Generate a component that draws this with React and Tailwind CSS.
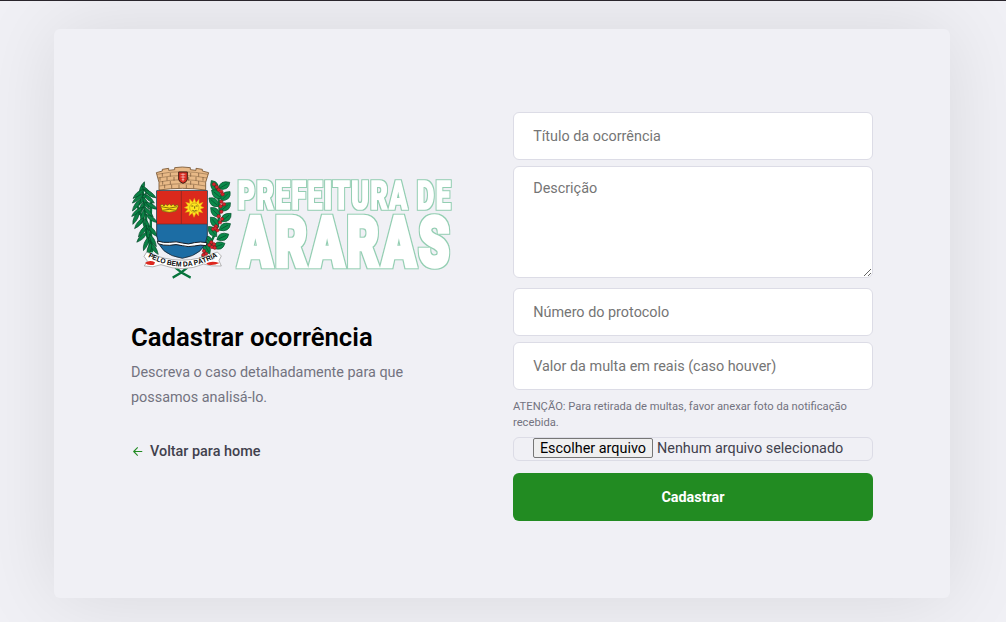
import React from "react";

const leftLeaves = [
  [66, 100, 20], [80, 108, -45], [56, 116, 50], [90, 116, -55], [54, 130, 50], [86, 130, -50], [68, 132, 30],
  [78, 144, -30], [50, 150, 35], [94, 152, -60], [64, 160, 20], [52, 170, 50], [84, 170, -45],
  [48, 188, 25], [68, 184, 10], [94, 190, -55], [58, 204, 40], [82, 210, -25], [98, 228, -40],
  [68, 228, 35], [86, 240, -15], [66, 246, 45], [98, 256, -30], [78, 266, 20], [102, 280, -35], [88, 282, 15],
];

const rightLeaves = [
  [284, 94, -30], [312, 92, 60], [290, 118, -50], [316, 124, 45], [282, 142, -50], [316, 156, 50],
  [286, 172, -45], [318, 188, 50], [284, 202, -40], [314, 216, 60], [278, 230, -40], [308, 246, 65],
  [266, 258, -40], [296, 272, 70], [260, 280, -30],
];

const berries = [
  [282, 88], [290, 96], [296, 104], [304, 110], [308, 118], [304, 140], [312, 148], [302, 154], [304, 170],
  [296, 184], [306, 192], [300, 202], [288, 214], [280, 222], [292, 226], [286, 220], [274, 262], [282, 268],
  [276, 276], [284, 278], [268, 270], [252, 288], [258, 296], [250, 300],
];

const bricks = [
  [127, 61], [151, 61], [212, 61], [236, 61], [120, 73], [141, 73], [162, 73], [206, 73], [228, 73],
  [249, 73], [128, 85], [151, 85], [212, 85], [236, 85], [134, 96], [155, 96], [177, 96], [199, 96], [221, 96],
];

function Logo() {
  return (
    <svg className="block h-[114px] w-[321px] overflow-visible" viewBox="33 33 963 342" role="img" aria-label="Prefeitura de Araras">
      <defs>
        <filter id="letter-edge" x="-5%" y="-10%" width="110%" height="120%" colorInterpolationFilters="sRGB">
          <feMorphology in="SourceAlpha" operator="dilate" radius="3" result="spread" />
          <feFlood floodColor="#93ceb2" />
          <feComposite in2="spread" operator="in" result="edge" />
          <feMerge>
            <feMergeNode in="edge" />
            <feMergeNode in="SourceGraphic" />
          </feMerge>
        </filter>
      </defs>
      <g fill="none" stroke="#07743c" strokeWidth="7">
        <path d="M66 92Q76 180 92 292M50 148Q70 190 86 262M94 140Q90 210 96 292" />
        <path d="M280 82Q330 190 246 306M158 368Q180 358 202 338M212 368Q188 358 166 338" />
      </g>
      <g fill="#0a8144" stroke="#064a2a" strokeWidth="2">
        {leftLeaves.map(([x, y, a]) => (
          <path key={`${x}-${y}`} transform={`translate(${x} ${y}) rotate(${a})`} d="M0-21Q11-3 0 22Q-11 2 0-21Z" />
        ))}
      </g>
      <g fill="#0a8a4a" stroke="#07502d" strokeWidth="2">
        {rightLeaves.map(([x, y, a]) => (
          <path key={`${x}-${y}`} transform={`translate(${x} ${y}) rotate(${a})`} d="M0-20Q22-4 0 19Q-22 2 0-20ZM0-12V13" />
        ))}
      </g>
      <g fill="#d9232a" stroke="#78151b" strokeWidth="1.5">
        {berries.map(([x, y]) => <circle key={`${x}-${y}`} cx={x} cy={y} r="5.2" />)}
      </g>

      <path d="M109 53L127 48V43L146 40V46L164 44V38L187 36L211 38V44L228 46V40L247 43V48L266 53L257 82V105Q187 95 117 105V82Z" fill="#e8b987" stroke="#76532f" strokeWidth="2.5" />
      <path d="M111 58Q187 42 264 58M114 69Q187 54 261 69M117 81Q187 67 257 81M118 93Q187 79 257 93" fill="none" stroke="#80603f" strokeWidth="1.6" />
      <g stroke="#715135" strokeWidth="2">
        {bricks.map(([x, y]) => <path key={`${x}-${y}`} d={`M${x} ${y - 7}v11`} />)}
      </g>
      <path d="M176 51H202V73Q200 82 189 85Q177 81 176 73Z" fill="#dc2b20" stroke="#432018" strokeWidth="3" />
      <path d="M182 58H196M182 66H196M185 74H193M189 55V79" stroke="#fff" strokeWidth="1.5" />

      <path d="M110 107H262V242Q256 299 187 310Q116 299 110 242Z" fill="#1c6da4" stroke="#222b35" strokeWidth="2.5" />
      <path d="M111 108H261V207H111Z" fill="#da291c" />
      <path d="M184 108V207M111 207H261" stroke="#7f251f" strokeWidth="2" />
      <path d="M121 151L127 148L132 153L137 147L142 152L148 147L154 152L160 147L164 153L172 149L175 154L168 168Q148 176 127 168Z" fill="#ffdf19" stroke="#625616" strokeWidth="2" />
      <path d="M124 155Q148 164 172 155M128 166Q148 160 168 166" fill="none" stroke="#866f09" strokeWidth="3" />
      <path d="M223 130L228 143L237 133L237 146L249 142L242 153L252 158L241 162L248 173L236 170L236 183L228 174L222 187L217 174L207 182L209 170L196 172L204 162L193 158L204 152L197 142L209 145L209 132L218 142Z" fill="#ffe51e" stroke="#e8a010" strokeWidth="1.5" />
      <circle cx="223" cy="158" r="14" fill="#ffe51e" stroke="#a17b13" strokeWidth="1.5" />
      <path d="M214 153H220M227 153H233M224 154V161M217 166Q223 171 230 166" fill="none" stroke="#514413" strokeWidth="2.5" />
      <path d="M112 258Q131 264 149 262Q169 258 187 264Q205 270 223 263Q241 259 261 263L259 272Q242 268 223 273Q204 277 187 272Q168 266 149 271Q129 272 114 266Z" fill="#fff" stroke="#171d25" strokeWidth="3" />

      <path d="M73 333L82 318L72 304L80 291Q184 340 292 291L304 303L297 317L304 333Q272 335 251 327Q190 354 123 329Q99 340 73 333Z" fill="#fff" stroke="#8f8f8f" strokeWidth="2" />
      <path d="M75 324Q89 313 105 322L102 329Q85 333 75 324ZM259 325Q275 316 298 324Q281 333 263 329Z" fill="#dd281f" />
      <path id="motto-line" d="M82 304Q187 366 298 302" fill="none" />
      <text fill="#050505" fontFamily="Liberation Sans, sans-serif" fontSize="21" fontWeight="700">
        <textPath href="#motto-line" startOffset="2" textLength="220" lengthAdjust="spacingAndGlyphs">PELO BEM DA PÁTRIA</textPath>
      </text>

      <g filter="url(#letter-edge)" fill="#fff" stroke="#fff" fontFamily="Roboto, sans-serif" fontWeight="900">
        <text x="353" y="162" fontSize="118" strokeWidth="5" letterSpacing="7" textLength="643" lengthAdjust="spacingAndGlyphs">PREFEITURA DE</text>
        <text x="356" y="332" fontSize="204" strokeWidth="13" letterSpacing="14" textLength="642" lengthAdjust="spacingAndGlyphs">ARARAS</text>
      </g>
    </svg>
  );
}

const field = "block w-full rounded-[6px] border border-[#dcdce6] bg-white px-[19.2px] text-[14.4px] text-[#333] outline-none placeholder:text-[#757575]";

export default function App() {
  return (
    <div className="h-[622px] w-full overflow-hidden border-t border-[#29252c] bg-[#f0f0f5] pt-7 font-['Roboto',sans-serif] antialiased">
      <main className="ml-[54px] flex h-[569px] w-[896px] justify-between rounded-[6px] bg-[#f0f0f5] pr-[77px] pl-[77px] shadow-[0_0_80px_rgba(0,0,0,0.1)]">
        <section className="w-[321px] pt-[137px]">
          <Logo />
          <h1 className="mt-[42px] text-[25.7px] leading-[30px] font-semibold text-black">Cadastrar ocorrência</h1>
          <p className="mt-[8px] w-[304px] text-[14.4px] leading-[25px] text-[#737380]">
            Descreva o caso detalhadamente para que possamos analisá-lo.
          </p>
          <a href="#" className="mt-[33px] flex h-[18px] items-center text-[14.4px] font-medium text-[#41414d]">
            <svg className="mr-[6px] mb-px size-[13px]" viewBox="0 0 24 24" fill="none" stroke="#228b22" strokeWidth="2" strokeLinecap="round" strokeLinejoin="round">
              <path d="M20 12H5M12 19L5 12L12 5" />
            </svg>
            Voltar para home
          </a>
        </section>
        <form className="w-[360px] pt-[83px]" onSubmit={(e) => e.preventDefault()}>
          <input className={`${field} h-12`} placeholder="Título da ocorrência" />
          <textarea className={`${field} mt-[6px] h-28 resize-y py-[12.8px] leading-[17px]`} placeholder="Descrição" />
          <input className={`${field} mt-[10px] h-12`} placeholder="Número do protocolo" />
          <input className={`${field} mt-[6px] h-12`} placeholder="Valor da multa em reais (caso houver)" />
          <p className="mt-[9px] text-[11.2px] leading-[16px] text-[#737380]">
            ATENÇÃO: Para retirada de multas, favor anexar foto da notificação recebida.
          </p>
          <div className="mt-[6px] flex h-6 items-start rounded-[6px] border border-[#dcdce6] px-[19px] text-[14.4px] leading-[21px] whitespace-nowrap text-[#41414d]">
            <button type="button" className="mr-1 h-5 w-[120px] shrink-0 rounded-[2px] border border-[#767676] bg-[#efefef] pt-px leading-[18px] text-black">
              Escolher arquivo
            </button>
            <span>Nenhum arquivo selecionado</span>
          </div>
          <button type="submit" className="mt-3 h-12 w-full rounded-[6px] bg-[#228b22] pt-0.5 text-[14.4px] font-bold text-white">
            Cadastrar
          </button>
        </form>
      </main>
    </div>
  );
}
